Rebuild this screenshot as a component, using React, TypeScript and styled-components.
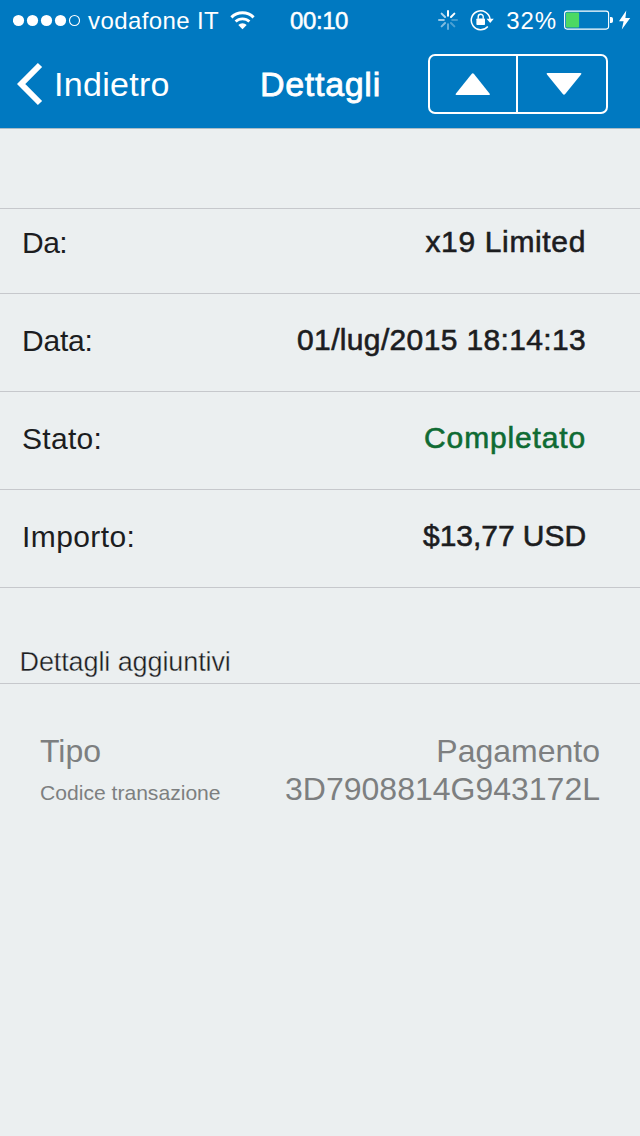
import React from "react";
import styled, { createGlobalStyle } from "styled-components";

const Global = createGlobalStyle`
  *, *::before, *::after { box-sizing: border-box; }
  body {
    margin: 0;
    background: #ebeff0;
    font-family: "Liberation Sans", Arial, sans-serif;
  }
`;

const Screen = styled.div`
  width: 640px;
  height: 1136px;
  overflow: hidden;
  display: flex;
  flex-direction: column;
  background: #ebeff0;
  color: #1c1d1f;
`;

const Header = styled.header`
  height: 129px;
  background: #0079c1;
  border-bottom: 1px solid #a9bcc7;
  color: #fff;
`;

const StatusBar = styled.div`
  height: 40px;
  padding: 0 9px 0 13px;
  display: grid;
  grid-template-columns: 277px auto 1fr;
  align-items: center;
  font-size: 24px;
  line-height: 28px;
`;

const StatusGroup = styled.div<{ $end?: boolean }>`
  display: flex;
  align-items: center;
  justify-content: ${(p) => (p.$end ? "flex-end" : "flex-start")};
  svg { flex: none; }
`;

const Carrier = styled.span`
  margin: 1px 0 0 8px;
  width: 142px;
  letter-spacing: 0.4px;
`;

const Clock = styled.time`
  padding-top: 1px;
  letter-spacing: -0.4px;
  -webkit-text-stroke: 0.5px #fff;
`;

const Percent = styled.span`
  margin: 1px 7px 0 12px;
  letter-spacing: 0.9px;
`;

const NavBar = styled.div`
  height: 88px;
  padding: 0 32px 0 17px;
  display: grid;
  grid-template-columns: 242px 1fr 180px;
  align-items: center;
  font-size: 34px;
  line-height: 40px;
`;

const Back = styled.div`
  display: flex;
  align-items: center;
  gap: 9px;
  letter-spacing: 0.3px;
`;

const Title = styled.h1`
  margin: 0;
  padding-left: 1px;
  font-size: 34px;
  font-weight: 400;
  letter-spacing: 0.7px;
  -webkit-text-stroke: 0.8px #fff;
`;

const Stepper = styled.div`
  height: 60px;
  display: grid;
  grid-template-columns: 88px 1fr;
  border: 2px solid #fff;
  border-radius: 7px;
`;

const StepButton = styled.div<{ $divided?: boolean }>`
  display: flex;
  align-items: center;
  justify-content: center;
  padding-left: ${(p) => (p.$divided ? 0 : 3)}px;
  border-right: ${(p) => (p.$divided ? "2px solid #fff" : "none")};
`;

const Rows = styled.section`
  margin-top: 79px;
  border-top: 1px solid #c6c8cc;
`;

const Row = styled.div<{ $height?: number }>`
  height: ${(p) => p.$height ?? 98}px;
  padding: 0 54px 33px 22px;
  display: flex;
  justify-content: space-between;
  align-items: flex-end;
  border-bottom: 1px solid #c6c8cc;
  font-size: 30px;
  line-height: 34px;
`;

const Label = styled.span<{ $spacing: number }>`
  letter-spacing: ${(p) => p.$spacing}px;
`;

const Value = styled.span<{ $color?: string; $spacing: number }>`
  margin-bottom: 1px;
  color: ${(p) => p.$color ?? "#1c1d1f"};
  letter-spacing: ${(p) => p.$spacing}px;
  -webkit-text-stroke: 0.6px currentColor;
`;

const SectionTitle = styled.h2`
  margin: 0;
  height: 96px;
  padding: 58px 0 0 19.5px;
  border-bottom: 1px solid #c6c8cc;
  font-size: 27px;
  font-weight: 400;
  line-height: 32px;
  letter-spacing: -0.1px;
  -webkit-text-stroke: 0.35px #ebeff0;
`;

const Extras = styled.section`
  padding: 48px 40px 0;
  color: #7d7f80;
  font-size: 32px;
  line-height: 38px;
`;

const ExtraRow = styled.div`
  display: flex;
  justify-content: space-between;
  align-items: baseline;
`;

const SmallLabel = styled.span`
  font-size: 21.1px;
`;

const Signal = () => (
  <svg width="67" height="14" viewBox="0 0 67 14" fill="#fff">
    {[5.5, 19.5, 33.5, 47.5].map((x) => (
      <circle key={x} cx={x} cy="7.5" r="5.6" />
    ))}
    <circle cx="61.5" cy="7.5" r="5" fill="none" stroke="#fff" strokeWidth="1.1" />
  </svg>
);

const Wifi = () => (
  <svg width="26" height="20" viewBox="0 0 26 20" fill="none" stroke="#fff">
    <path d="M1.4 7.4a15.8 15.8 0 0 1 22.2 0" strokeWidth="3" />
    <path d="M5.6 11.6a10 10 0 0 1 13.8 0" strokeWidth="2.8" />
    <path d="M12.5 19.3l-4.2-4.3a6 6 0 0 1 8.4 0z" fill="#fff" stroke="none" />
  </svg>
);

const spokes = [1, 1, 0.25, 0.3, 0.4, 0.5, 0.6, 0.7];

const SpinnerSvg = styled.svg`
  margin-right: 12px;
`;

const Spinner = () => (
  <SpinnerSvg width="20" height="20" viewBox="0 0 20 20" stroke="#fff" strokeWidth="2" strokeLinecap="round">
    {spokes.map((o, i) => (
      <path key={i} d="M10 1v4.8" opacity={o} transform={`rotate(${i * 45} 10 10)`} />
    ))}
  </SpinnerSvg>
);

const RotationLock = () => (
  <svg width="24" height="22" viewBox="0 0 24 22" fill="none" stroke="#fff">
    <path d="M17.8 17.4A9.4 9.4 0 1 1 20 10" strokeWidth="1.5" />
    <path d="M16.6 9.8h7.2l-3.6 4.2z" fill="#fff" stroke="none" />
    <rect x="6.4" y="9.4" width="8.6" height="6.6" rx="0.8" fill="#fff" stroke="none" />
    <path d="M8.2 9.8V7.8a2.5 2.5 0 0 1 5 0v2" strokeWidth="1.4" />
  </svg>
);

const Battery = () => (
  <svg width="50" height="20" viewBox="0 0 50 20">
    <rect x="0.6" y="1.1" width="44" height="18" rx="2.5" fill="none" stroke="#fff" strokeWidth="1.1" />
    <rect x="1.9" y="2.6" width="13.2" height="15" rx="0.8" fill="#4cd964" />
    <path d="M46 7h1.2a1.8 1.8 0 0 1 1.8 1.8v2.4a1.8 1.8 0 0 1-1.8 1.8h-1.2z" fill="#fff" />
  </svg>
);

const BoltSvg = styled.svg`
  margin-left: 4px;
`;

const Bolt = () => (
  <BoltSvg width="13" height="20" viewBox="0 0 13 20">
    <path d="M8.3 0.5L1 11.3h4.6L3.8 19.4 12.2 8H7.4z" fill="#fff" />
  </BoltSvg>
);

const BackChevron = () => (
  <svg width="28" height="44" viewBox="0 0 28 44" fill="none">
    <path d="M23 3L4.2 22 23 41" stroke="#fff" strokeWidth="6" />
  </svg>
);

const Triangle = ({ down }: { down?: boolean }) => (
  <svg width="36" height="22" viewBox="0 0 36 22" fill="#fff">
    <path
      d={
        down
          ? "M1.5 0h33q1.6 0 .5 1.4L19.2 21q-1.2 1.4-2.4 0L1 1.4Q-.1 0 1.5 0z"
          : "M1.5 22h32.5q1.6 0 .5-1.4L19 1q-1.2-1.4-2.4 0L1 20.6q-1.1 1.4.5 1.4z"
      }
    />
  </svg>
);

export default function App() {
  return (
    <Screen>
      <Global />
      <Header>
        <StatusBar>
          <StatusGroup>
            <Signal />
            <Carrier>vodafone IT</Carrier>
            <Wifi />
          </StatusGroup>
          <Clock>00:10</Clock>
          <StatusGroup $end>
            <Spinner />
            <RotationLock />
            <Percent>32%</Percent>
            <Battery />
            <Bolt />
          </StatusGroup>
        </StatusBar>
        <NavBar>
          <Back>
            <BackChevron />
            <span>Indietro</span>
          </Back>
          <Title>Dettagli</Title>
          <Stepper>
            <StepButton $divided>
              <Triangle />
            </StepButton>
            <StepButton>
              <Triangle down />
            </StepButton>
          </Stepper>
        </NavBar>
      </Header>
      <Rows>
        <Row $height={85}>
          <Label $spacing={-0.5}>Da:</Label>
          <Value $spacing={0.65}>x19 Limited</Value>
        </Row>
        <Row>
          <Label $spacing={-0.2}>Data:</Label>
          <Value $spacing={0.35}>01/lug/2015 18:14:13</Value>
        </Row>
        <Row>
          <Label $spacing={0.3}>Stato:</Label>
          <Value $spacing={0.85} $color="#0f6b33">Completato</Value>
        </Row>
        <Row>
          <Label $spacing={0.4}>Importo:</Label>
          <Value $spacing={-0.05}>$13,77 USD</Value>
        </Row>
      </Rows>
      <SectionTitle>Dettagli aggiuntivi</SectionTitle>
      <Extras>
        <ExtraRow>
          <span>Tipo</span>
          <span>Pagamento</span>
        </ExtraRow>
        <ExtraRow>
          <SmallLabel>Codice transazione</SmallLabel>
          <span>3D7908814G943172L</span>
        </ExtraRow>
      </Extras>
    </Screen>
  );
}
